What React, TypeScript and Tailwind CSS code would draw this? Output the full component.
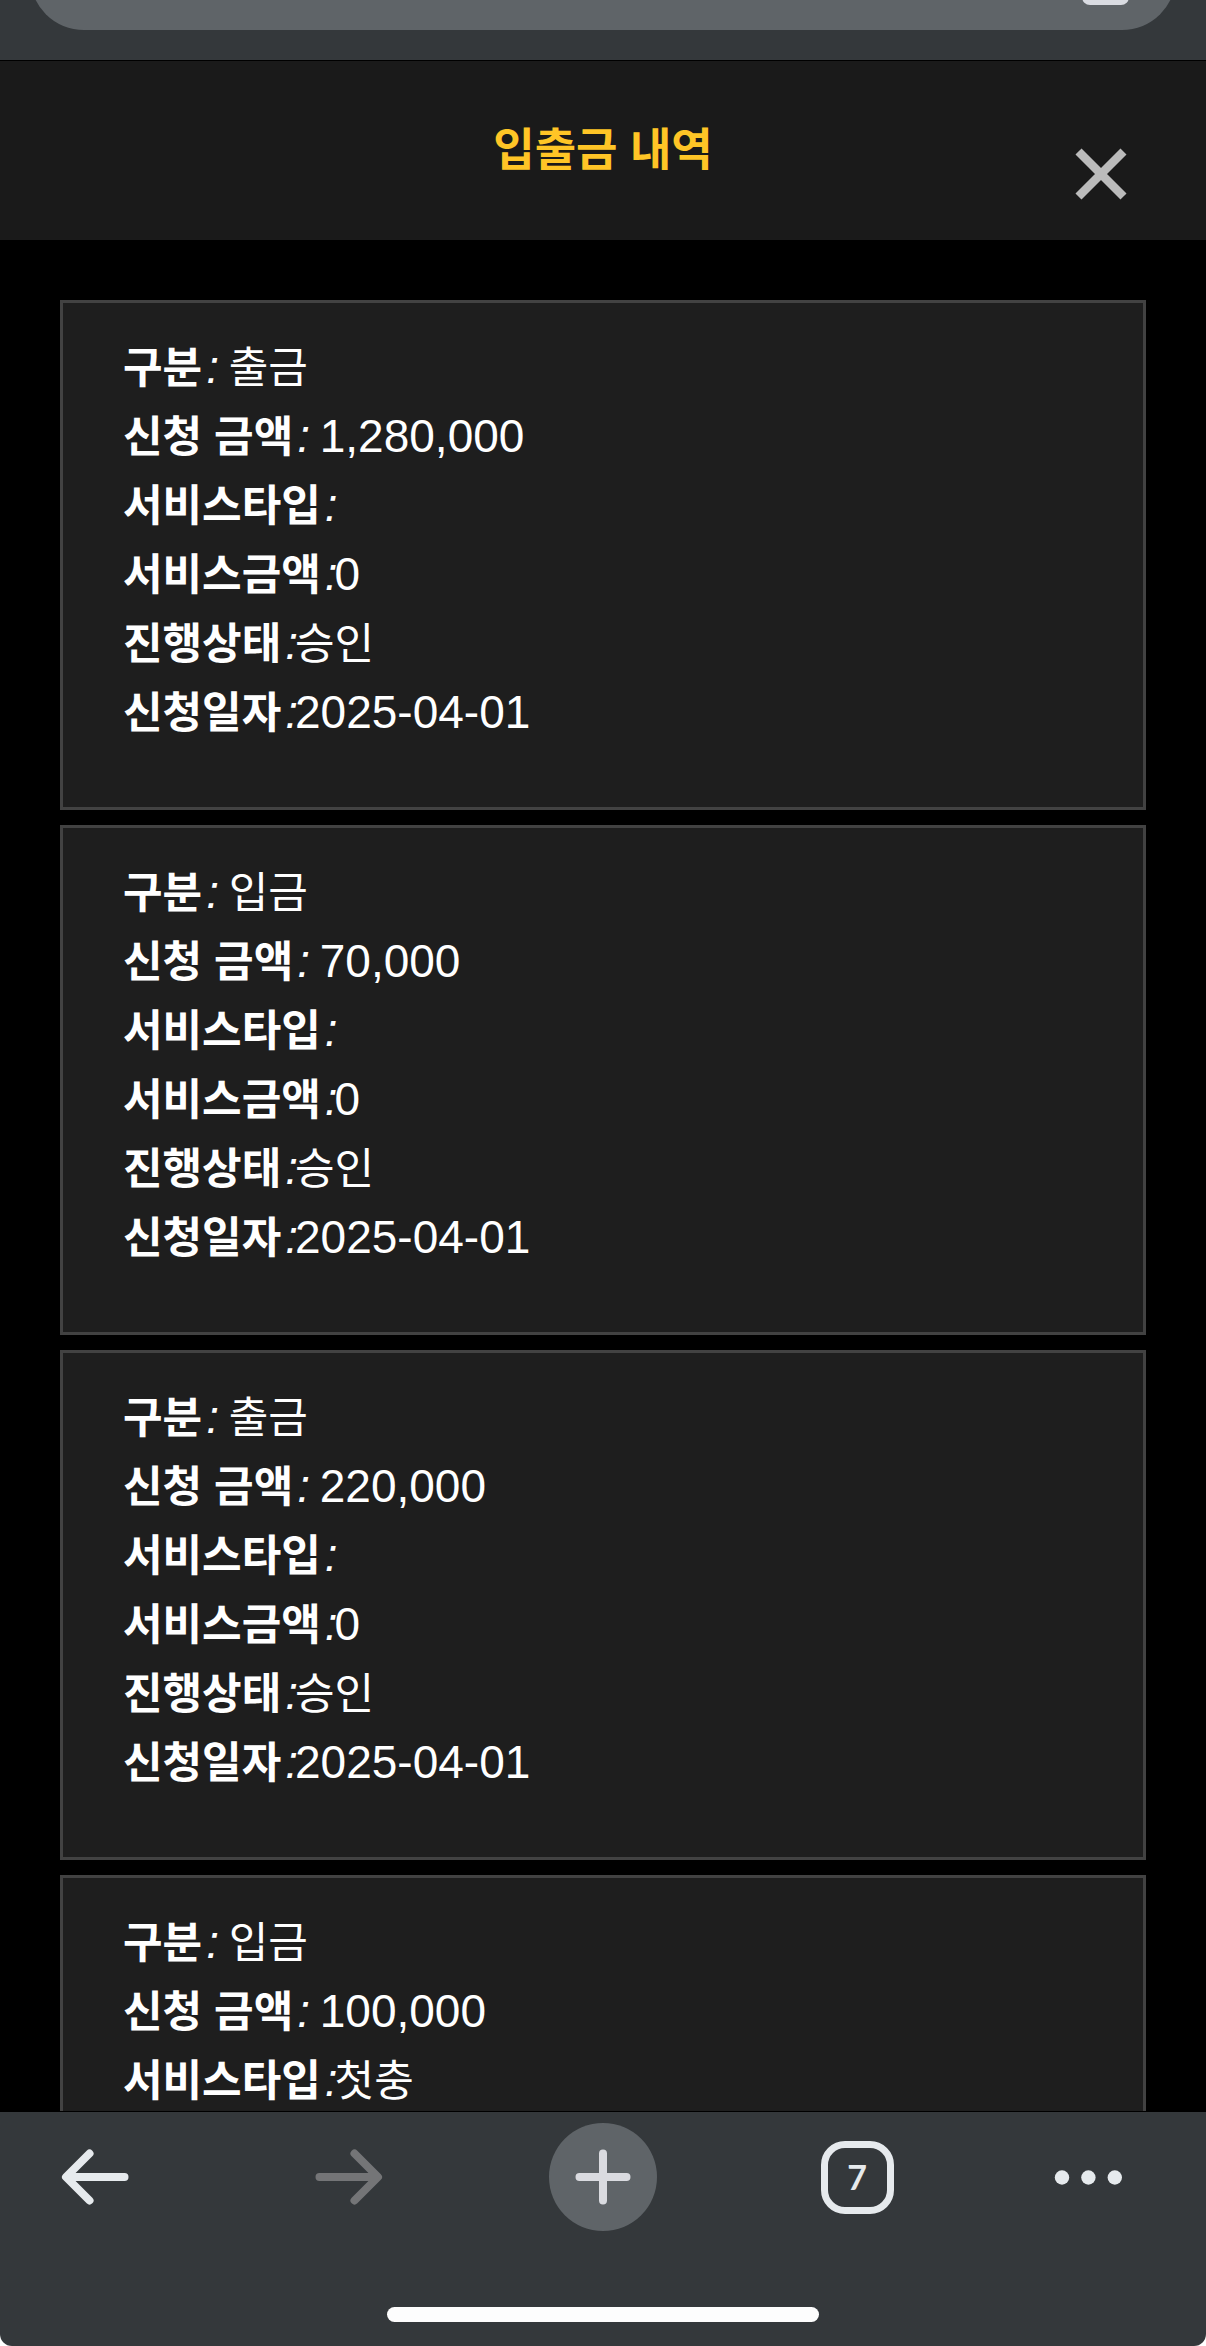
import clsx from 'clsx';

interface Field {
  label: string;
  value: string;
  spaced?: boolean;
}

const withSpace = (label: string, value: string): Field => ({ label, value, spaced: true });

const records: Field[][] = [
  [
    withSpace('구분', '출금'),
    withSpace('신청 금액', '1,280,000'),
    { label: '서비스타입', value: '' },
    { label: '서비스금액', value: '0' },
    { label: '진행상태', value: '승인' },
    { label: '신청일자', value: '2025-04-01' },
  ],
  [
    withSpace('구분', '입금'),
    withSpace('신청 금액', '70,000'),
    { label: '서비스타입', value: '' },
    { label: '서비스금액', value: '0' },
    { label: '진행상태', value: '승인' },
    { label: '신청일자', value: '2025-04-01' },
  ],
  [
    withSpace('구분', '출금'),
    withSpace('신청 금액', '220,000'),
    { label: '서비스타입', value: '' },
    { label: '서비스금액', value: '0' },
    { label: '진행상태', value: '승인' },
    { label: '신청일자', value: '2025-04-01' },
  ],
  [withSpace('구분', '입금'), withSpace('신청 금액', '100,000'), { label: '서비스타입', value: '첫충' }],
];

function AddressBar() {
  return (
    <div className="flex h-[60px] shrink-0 items-end overflow-hidden bg-[#34383b] px-[30px] pb-[30px]">
      <div className="flex h-[108px] flex-1 shrink-0 items-end justify-end rounded-full bg-[#5f6468] pr-[47px] pb-[25px]">
        <button type="button" aria-label="공유" className="h-10 w-[47px] rounded-lg bg-[#dadce2]" />
      </div>
    </div>
  );
}

function PageHeader() {
  return (
    <header className="grid h-[180px] shrink-0 grid-cols-[1fr_auto_1fr] items-center border-t border-black bg-[#1a1a1a]">
      <h1 className="col-start-2 text-[45px] font-bold text-[#ffc526]">입출금 내역</h1>
      <button type="button" aria-label="닫기" className="mr-[78px] mb-[39px] self-end justify-self-end">
        <svg className="size-[54px]" viewBox="0 0 54 54" fill="none" stroke="#bbbbbb" strokeWidth="8.5">
          <path d="M4.5 4.5 49.5 49.5M49.5 4.5 4.5 49.5" />
        </svg>
      </button>
    </header>
  );
}

function FieldRow({ label, value, spaced }: Field) {
  const isNumeric = /^[\d,-]+$/.test(value);

  return (
    <div className="flex h-[69px] items-baseline leading-[69px] text-white">
      <dt className="flex items-baseline">
        <span className="text-[43px] font-bold">{label}</span>
        <span className="-mr-[3px] ml-1 text-[46px] whitespace-pre italic">{spaced ? ': ' : ':'}</span>
      </dt>
      <dd className={clsx(isNumeric ? 'text-[46px]' : 'text-[43px]')}>{value}</dd>
    </div>
  );
}

function RecordCard({ fields }: { fields: Field[] }) {
  return (
    <li className="border-[3px] border-[#424242] bg-[#1e1e1e] px-[60px] pt-[30px] pb-[60px]">
      <dl>
        {fields.map((field) => (
          <FieldRow key={field.label} {...field} />
        ))}
      </dl>
    </li>
  );
}

function BottomBar() {
  const button = 'flex h-[108px] w-[108px] items-center justify-center';

  return (
    <footer className="shrink-0 bg-black pt-px">
      <div className="bg-white">
        <div className="flex h-[234px] flex-col items-center justify-between rounded-b-xl bg-[#34383b] pt-[11px] pb-6">
          <nav className="flex w-full justify-between px-[41px]">
            <button type="button" aria-label="뒤로" className={button}>
              <svg className="h-[56px] w-[68px]" viewBox="0 0 68 56" fill="none" stroke="#e6eaed" strokeWidth="8" strokeLinecap="round" strokeLinejoin="round">
                <path d="M63.5 28H6M28.5 4.5 5 28 28.5 51.5" />
              </svg>
            </button>
            <button type="button" aria-label="앞으로" className={button}>
              <svg className="h-[56px] w-[68px]" viewBox="0 0 68 56" fill="none" stroke="#747577" strokeWidth="8" strokeLinecap="round" strokeLinejoin="round">
                <path d="M4.5 28H62M39.5 4.5 63 28 39.5 51.5" />
              </svg>
            </button>
            <button type="button" aria-label="새 탭" className={clsx(button, 'rounded-full bg-[#5f6468]')}>
              <svg className="size-[56px]" viewBox="0 0 56 56" fill="none" stroke="#dadbe0" strokeWidth="8" strokeLinecap="round">
                <path d="M28 4.5V51.5M4.5 28H51.5" />
              </svg>
            </button>
            <button type="button" className={button}>
              <span className="flex size-[73px] items-center justify-center rounded-3xl border-[7px] border-[#e6eaed] font-['Lato'] text-[34px] leading-none font-bold text-[#e6eaed]">
                7
              </span>
            </button>
            <button type="button" aria-label="메뉴" className="flex h-[108px] w-[108px] items-center">
              <svg className="h-4 w-[66px] overflow-visible" viewBox="0 0 66 16" fill="#e6eaed">
                <circle cx="5" cy="8.5" r="7.2" />
                <circle cx="31.4" cy="8.5" r="7.2" />
                <circle cx="57.8" cy="8.5" r="7.2" />
              </svg>
            </button>
          </nav>
          <div className="h-[15px] w-[432px] rounded-full bg-[#fdfdfd]" />
        </div>
      </div>
    </footer>
  );
}

export default function App() {
  return (
    <div className="flex h-screen flex-col bg-black font-['Liberation_Sans','Noto_Sans_CJK_KR',sans-serif]">
      <AddressBar />
      <PageHeader />
      <main className="min-h-0 flex-1 overflow-y-auto px-[60px] pt-[60px] [scrollbar-width:none]">
        <ul className="flex flex-col gap-[15px]">
          {records.map((fields, index) => (
            <RecordCard key={index} fields={fields} />
          ))}
        </ul>
      </main>
      <BottomBar />
    </div>
  );
}
